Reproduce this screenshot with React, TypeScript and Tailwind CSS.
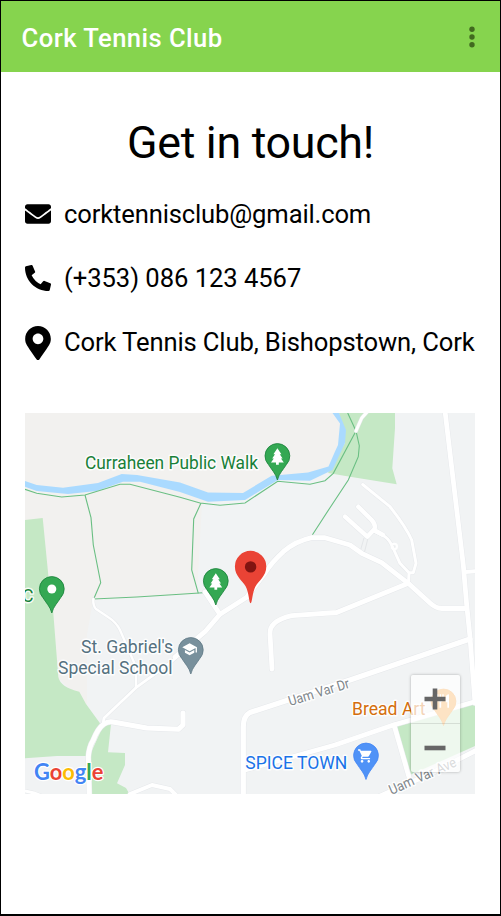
import type { ReactNode } from "react";
import { FaEnvelope, FaPhoneAlt, FaMapMarkerAlt } from "react-icons/fa";
import { MdSchool, MdShoppingCart, MdRestaurant } from "react-icons/md";

type Road = { d: string; w: number };

const roads: Road[] = [
  { d: "M130 794L152 785L170 789L177 796", w: 4 },
  { d: "M25 791L34 793L42 796", w: 3 },
  { d: "M89.3 796L88.3 757Q89 747 93.3 740Q98 728 104 724Q108 721 113 722L146.7 728L178.3 729.3L183 725V713", w: 5 },
  { d: "M103 724L104 718L136 687.7L170 663L205 631.7L220 614.3", w: 2.8 },
  { d: "M175 657L205 631.7L220 614.3L246.7 597.3L265 573Q272 562 283.3 551.7Q296 541 311.7 537.7H325L350 545L361.7 553.3L381.7 562.7L408.3 583.3L430 603Q436 608.5 442 608.5H466", w: 4.8 },
  { d: "M136 687.7V667L120 630Q116 622 108 617L96 609Q93 606 93.3 599", w: 2.4 },
  { d: "M205 592L220 614.3", w: 4.8 },
  { d: "M445 411L463.3 565L466.7 605L470 637L475 703", w: 4.8 },
  { d: "M465 572L477 571", w: 4 },
  { d: "M408.3 583.3L336.7 612.5L291.7 615.7Q269 621 270 634L272 669", w: 4.8 },
  { d: "M470 639L350 680L288.3 700L250 712.5Q243.3 716 243.3 727V796", w: 5.2 },
  { d: "M245 770L335 745L393.3 725L477 701", w: 4.6 },
  { d: "M394 725L409 777", w: 4.8 },
  { d: "M477 750L430 774L378 797", w: 4.8 },
  { d: "M362.7 484.5L390 506.7Q406 527 411.7 540L416 563.3L413.3 572.7H409L400 563.3L391.7 545Q388 538 383.3 535.5L373.3 531M409 573L408.5 583", w: 3 },
  { d: "M358.3 506.7L371.7 520Q376 525 374.5 529L367.3 536.7L345 516.7M374 530L383 535", w: 4.4 },
  { d: "M356 431L361.7 418L368 411", w: 3 },
];

function Pin({ x, y, fill, edge, children }: { x: number; y: number; fill: string; edge: string; children?: ReactNode }) {
  return (
    <g transform={`translate(${x} ${y})`}>
      <path
        d="M0 0C-1.6 -6.5 -6 -10.5 -9 -15.5A12.4 12.4 0 1 1 9 -15.5C6 -10.5 1.6 -6.5 0 0Z"
        fill={fill}
        stroke={edge}
        strokeWidth="0.8"
      />
      {children}
    </g>
  );
}

function Fir() {
  return (
    <path
      d="M0 -31.8L4 -25.8H2.4L5.2 -21.6H3.6L6.4 -17.6H1.4V-15.2H-1.4V-17.6H-6.4L-3.6 -21.6H-5.2L-2.4 -25.8H-4Z"
      fill="#fff"
    />
  );
}

function Label({ x, y, w, fill, size = 18.8, angle = 0, children }: { x: number; y: number; w: number; fill: string; size?: number; angle?: number; children: string }) {
  return (
    <text
      transform={`translate(${x} ${y}) rotate(${angle})`}
      fontSize={size}
      textLength={w}
      lengthAdjust="spacingAndGlyphs"
      fill={fill}
      stroke="#fff"
      strokeOpacity="0.85"
      strokeWidth="3"
      strokeLinejoin="round"
      paintOrder="stroke"
    >
      {children}
    </text>
  );
}

function MapDrawing() {
  return (
    <svg viewBox="25 413 450 381" className="block h-full w-full font-['Roboto',sans-serif]">
      <rect x="25" y="413" width="451" height="382" fill="#f1f3f4" />
      <path fill="#f2f1ef" d="M25 413H340V448L330 467L308 473L272 477L245 494L202 503L197 594L93 600L87 635V705L58 678L25 520Z" />
      <g fill="#c5e8c5">
        <path d="M339 413H395V428L392.3 468.3L396.7 484.3L350 476.7L328 473L345 443Z" />
        <path d="M25 520L42.7 518L48.3 575L53.3 613L58.3 676.7Q60 687 79.3 691.7L86 704L100 723.3L88.3 756H57L25 758.3Z" />
        <path d="M104 724H111L108 752.3L125 753V765L117 783.3L126 788L130 795H89V757Z" />
        <path d="M396 726.7L475 703.3V746L410 775Z" />
      </g>
      <path
        fill="#aadaff"
        d="M25 481L36.7 485L63 487.7L98 483L121.7 474L137 475L180 482.5L208 492.5L243 493L271.7 475.7L308 472.5L328.5 466.5L335 451.5L338 445L340 423.5L332.5 413H339L346 430L345 443L332.5 470L310 480.7L278 480L245 500L208 501.7L180 492L140 481.7H123L96.7 491L68 494L36.7 491L25 486.7Z"
      />
      <g fill="none" stroke="#6abf83" strokeWidth="1.1">
        <path d="M25 489.3L36.7 493.3L61.7 497L85 495L120 484.3H130L180 497.3L200 503L220 505.3L245 503L277.7 481.3L310 484.3L325 480.7L333.3 473.3L356 431L347.7 413" />
        <path d="M85 495L91 517.7L93.3 545L100.7 582.7L93.7 599L136.7 597L180 594.3L203 592.7" />
        <path d="M201 503L193.7 519L191.7 570L198.3 593.3M356 431L359.3 445.7L358.3 456.7L348.3 480L330 507.7L312.3 535" />
      </g>
      <path d="M364 538L360 552M368 538L364.5 552" stroke="#dfe2e5" strokeWidth="0.8" fill="none" />
      <g fill="none" strokeLinecap="round" strokeLinejoin="round">
        {roads.map((r) => (
          <path key={`edge-${r.d}`} d={r.d} stroke="#e6e8eb" strokeWidth={r.w + 0.9} />
        ))}
        {roads.map((r) => (
          <path key={r.d} d={r.d} stroke="#fff" strokeWidth={r.w} />
        ))}
        <circle cx="394.3" cy="546.5" r="2.7" stroke="#fff" strokeWidth="2" />
      </g>

      <Label x={85} y={469} w={173} fill="#188038">Curraheen Public Walk</Label>
      <Label x={22} y={602} w={11.5} fill="#188038">C</Label>
      <Label x={81} y={653} w={92} fill="#55717f">St. Gabriel's</Label>
      <Label x={58} y={674} w={114.5} fill="#55717f">Special School</Label>
      <Label x={245.3} y={769} w={102} fill="#1a73e8">SPICE TOWN</Label>
      <Label x={352} y={715} w={73.5} fill="#d56e0c">Bread Art</Label>
      <Label x={290} y={706} w={63} size={14} angle={-17} fill="#80868b">Uam Var Dr</Label>
      <Label x={391.5} y={795} w={72} size={14} angle={-24} fill="#80868b">Uam Var Ave</Label>

      <Pin x={277.4} y={480} fill="#34a853" edge="#188038">
        <Fir />
      </Pin>
      <Pin x={215.8} y={605} fill="#34a853" edge="#188038">
        <Fir />
      </Pin>
      <Pin x={51.8} y={613} fill="#34a853" edge="#188038">
        <circle cy="-24" r="4.5" fill="#fff" />
      </Pin>
      <Pin x={190.8} y={674} fill="#78909c" edge="#5f7885">
        <MdSchool x={-9.2} y={-32.8} width={18.4} height={18.4} color="#fff" />
      </Pin>
      <Pin x={366} y={779.5} fill="#4f92f7" edge="#4285f4">
        <MdShoppingCart x={-8.6} y={-31.5} width={17} height={17} color="#fff" />
      </Pin>
      <Pin x={443.5} y={725.5} fill="#f9a13a" edge="#f29528">
        <MdRestaurant x={-8.5} y={-32.5} width={17} height={17} color="#fff" />
      </Pin>

      <g transform="translate(250.6 603.3)">
        <path d="M0 0C-1.6 0 -1.6 -11 -5 -17C-8 -22.5 -15.7 -27 -15.7 -36.8A15.7 15.7 0 0 1 15.7 -36.8C15.7 -27 8 -22.5 5 -17C1.6 -11 1.6 0 0 0Z" fill="#ea4335" />
        <circle cy="-36.4" r="5.7" fill="#811411" />
      </g>

      <text
        x="34"
        y="779.7"
        fontSize="23.5"
        fontWeight="700"
        textLength="69.5"
        lengthAdjust="spacingAndGlyphs"
        stroke="#fff"
        strokeWidth="2.4"
        strokeLinejoin="round"
        paintOrder="stroke"
        className="font-['Lato',sans-serif]"
      >
        <tspan fill="#4285f4">G</tspan>
        <tspan fill="#ea4335">o</tspan>
        <tspan fill="#fbbc04">o</tspan>
        <tspan fill="#4285f4">g</tspan>
        <tspan fill="#34a853">l</tspan>
        <tspan fill="#ea4335">e</tspan>
      </text>
    </svg>
  );
}

function ZoomControl() {
  return (
    <div className="absolute right-[15.5px] bottom-[22.5px] flex h-[97px] w-[48.5px] flex-col rounded-xs bg-white/70 shadow-[0_0_3px_rgba(0,0,0,0.3)]">
      <button aria-label="Zoom in" className="flex flex-1 items-center justify-center border-b border-black/10">
        <svg width="22" height="22" viewBox="0 0 22 22" className="text-[#666]">
          <path d="M.5 11H21.5M11 .5V21.5" stroke="currentColor" strokeWidth="4.6" />
        </svg>
      </button>
      <button aria-label="Zoom out" className="flex flex-1 items-center justify-center">
        <svg width="22" height="22" viewBox="0 0 22 22" className="text-[#666]">
          <path d="M.5 11H21.5" stroke="currentColor" strokeWidth="4.6" />
        </svg>
      </button>
    </div>
  );
}

function ContactRow({ icon, children }: { icon: ReactNode; children: ReactNode }) {
  return (
    <div className="flex h-16 items-center">
      <span className="flex w-[26px] shrink-0 justify-center">{icon}</span>
      <span className="ml-[13px] text-[25.6px] leading-8 whitespace-nowrap">{children}</span>
    </div>
  );
}

export default function App() {
  return (
    <div className="flex h-[916px] w-[501px] flex-col overflow-hidden border border-b-2 border-black bg-white font-['Roboto',sans-serif] text-black">
      <header className="flex h-[71px] shrink-0 items-center justify-between bg-[#86d44e] pr-[25px] pl-[20.5px]">
        <span className="pt-1 text-[25.6px] font-medium tracking-[0.45px] text-white">Cork Tennis Club</span>
        <svg width="6" height="22" viewBox="0 0 6 22" role="img" aria-label="Menu" className="text-[#41691f]">
          <circle cx="3" cy="3.3" r="2.7" fill="currentColor" />
          <circle cx="3" cy="11" r="2.7" fill="currentColor" />
          <circle cx="3" cy="18.7" r="2.7" fill="currentColor" />
        </svg>
      </header>
      <main className="flex flex-col px-6">
        <h1 className="mt-[45px] text-center text-[44.8px] leading-[52px] tracking-[-0.3px]">Get in touch!</h1>
        <section className="mt-[13px]">
          <ContactRow icon={<FaEnvelope size={26} />}>
            <span className="tracking-[-0.15px]">corktennisclub@gmail.com</span>
          </ContactRow>
          <ContactRow icon={<FaPhoneAlt size={26} />}>
            <span className="tracking-[-0.05px]">(+353) 086 123 4567</span>
          </ContactRow>
          <ContactRow icon={<FaMapMarkerAlt size={34.2} className="relative top-px" />}>
            <span className="tracking-[-0.13px]">Cork Tennis Club, Bishopstown, Cork</span>
          </ContactRow>
        </section>
        <section className="relative mt-[39px] h-[381px] w-[450px] overflow-hidden">
          <MapDrawing />
          <ZoomControl />
        </section>
      </main>
    </div>
  );
}
